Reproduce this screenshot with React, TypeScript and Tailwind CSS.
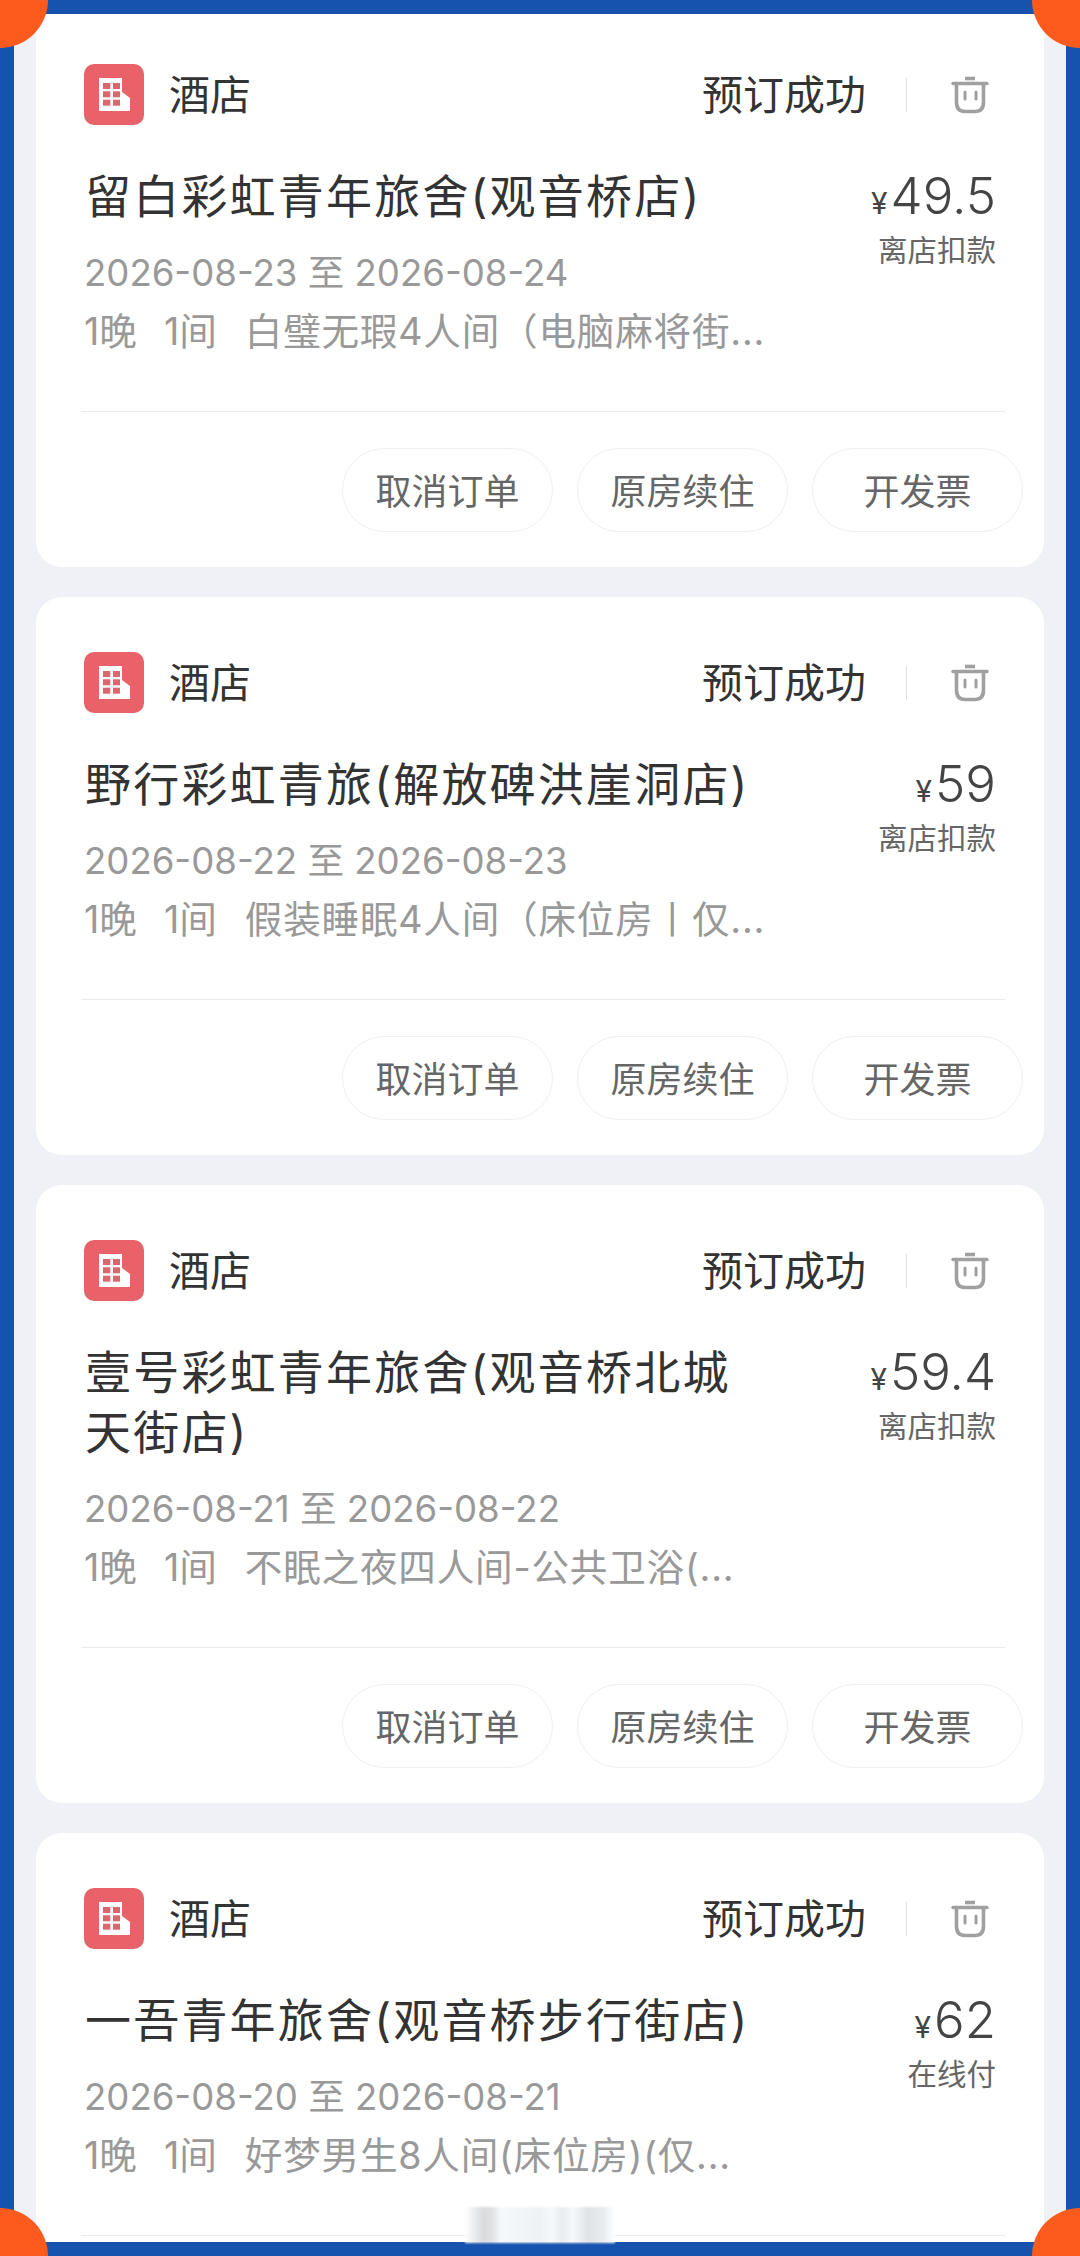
const cjk = "font-['Inter','Noto_Sans_CJK_SC',sans-serif]";

type Order = {
  name: string[];
  price: string;
  pay: string;
  dates: string;
  room: string;
};

const orders: Order[] = [
  { name: ["留白彩虹青年旅舍(观音桥店)"], price: "49.5", pay: "离店扣款", dates: "2026-08-23 至 2026-08-24", room: "白璧无瑕4人间（电脑麻将街..." },
  { name: ["野行彩虹青旅(解放碑洪崖洞店)"], price: "59", pay: "离店扣款", dates: "2026-08-22 至 2026-08-23", room: "假装睡眠4人间（床位房丨仅..." },
  { name: ["壹号彩虹青年旅舍(观音桥北城", "天街店)"], price: "59.4", pay: "离店扣款", dates: "2026-08-21 至 2026-08-22", room: "不眠之夜四人间-公共卫浴(..." },
  { name: ["一吾青年旅舍(观音桥步行街店)"], price: "62", pay: "在线付", dates: "2026-08-20 至 2026-08-21", room: "好梦男生8人间(床位房)(仅..." },
];

function HotelIcon() {
  return (
    <div className="-mt-[2px] flex h-[61px] w-[60px] items-center justify-center rounded-[10px] bg-[#e9626a]">
      <svg width="31" height="33" viewBox="0 0 31 33">
        <path d="M0 0H23V14L31 20V33H0Z" fill="#fff" />
        <g fill="#d9676d">
          <rect x="4" y="5" width="7.3" height="6" />
          <rect x="14" y="5" width="7" height="6" />
          <rect x="4" y="13.3" width="7.3" height="6" />
          <rect x="14" y="13.3" width="7" height="6" />
          <rect x="4" y="21.7" width="7.3" height="6" />
          <rect x="14" y="21.7" width="7" height="6" />
        </g>
      </svg>
    </div>
  );
}

function TrashIcon() {
  return (
    <svg width="38" height="38" viewBox="0 0 38 38" fill="none" stroke="#a0a0a0" className="block">
      <path d="M14 2.5H24" strokeWidth="3.6" />
      <path d="M2 7.5H36" strokeWidth="3.4" strokeLinecap="round" />
      <path d="M5.5 8V26C5.5 32 8.5 35.5 14 35.5H24C29.5 35.5 32.5 32 32.5 26V8" strokeWidth="3.6" />
      <path d="M14 16V23M25 16V23" strokeWidth="3" strokeLinecap="round" />
    </svg>
  );
}

function Pill({ label }: { label: string }) {
  return (
    <div className="flex h-[84px] w-[211px] items-center justify-center rounded-full border border-[#f0f0f1] pt-[4px] text-[36px] text-[#666666]">
      {label}
    </div>
  );
}

function Card({ o, first, last }: { o: Order; first: boolean; last: boolean }) {
  return (
    <div className={`rounded-[26px] bg-white pt-[55px] pb-[35px] ${first ? "-mt-[5px]" : ""}`}>
      <div className="flex h-[62px] items-center pl-[48px] pr-[55px]">
        <HotelIcon />
        <span className="ml-[25px] text-[41px] leading-none text-[#333333]">酒店</span>
        <span className="ml-auto text-[41px] leading-none text-[#333333]">预订成功</span>
        <span className="ml-[40px] mr-[44px] h-[34px] w-px bg-[#e2e2e2]" />
        <TrashIcon />
      </div>
      <div className="mt-[40px] flex justify-between pl-[49px] pr-[48px]">
        <div className="text-[46px] leading-[60px] tracking-[2.2px] text-[#333333]">
          {o.name.map((line) => (
            <div key={line}>{line}</div>
          ))}
        </div>
        <div className="-mb-[50px] flex shrink-0 flex-col items-end">
          <div className="flex h-[60px] items-baseline text-[#444444]">
            <span className="mr-[3px] text-[30px] leading-[60px]">¥</span>
            <span className="text-[51px] font-[350] leading-[60px]">{o.price}</span>
          </div>
          <div className="mt-[4px] text-[29.5px] leading-[40px] text-[#666666]">{o.pay}</div>
        </div>
      </div>
      <div className="mt-[21px] pl-[48px] text-[36.6px] leading-[52px] text-[#999999]">{o.dates}</div>
      <div className="mt-[7px] flex gap-[27px] whitespace-nowrap pl-[48px] text-[37.6px] leading-[52px] text-[#999999]">
        <span>1晚</span>
        <span>1间</span>
        <span className="ml-[1px] tracking-[0.8px]">{o.room}</span>
      </div>
      <div className="ml-[45px] mr-[39px] mt-[53px] h-px bg-[#e9eaec]" />
      {!last && (
        <div className="mt-[36px] flex justify-end gap-[24px] pr-[21px]">
          <Pill label="取消订单" />
          <Pill label="原房续住" />
          <Pill label="开发票" />
        </div>
      )}
    </div>
  );
}

export default function App() {
  return (
    <div className="relative h-[2256px] w-[1080px] overflow-hidden">
      <div className={`h-full w-full overflow-hidden border-[14px] border-[#1553ae] bg-[#eff1f6] ${cjk}`}>
        <div className="flex flex-col gap-[30px] px-[22px]">
          {orders.map((o, i) => (
            <Card key={o.dates} o={o} first={i === 0} last={i === orders.length - 1} />
          ))}
        </div>
      </div>
      <div className="absolute -left-[48px] -top-[48px] h-[96px] w-[96px] rounded-full bg-[#fd5a1e]" />
      <div className="absolute -right-[48px] -top-[48px] h-[96px] w-[96px] rounded-full bg-[#fd5a1e]" />
      <div className="absolute -bottom-[48px] -left-[48px] h-[96px] w-[96px] rounded-full bg-[#fd5a1e]" />
      <div className="absolute -bottom-[48px] -right-[48px] h-[96px] w-[96px] rounded-full bg-[#fd5a1e]" />
      <div className="absolute left-[465px] top-[2207px] h-[36px] w-[150px] bg-[linear-gradient(90deg,#ffffff_0%,#d9dbdd_12%,#dfe1e3_18%,#f6f9fb_24%,#eef2f5_50%,#f6f9fb_58%,#e8ecef_65%,#f6f9fb_72%,#dfe3e6_82%,#e8ecef_92%,#ffffff_100%)] blur-[1px]" />
    </div>
  );
}
